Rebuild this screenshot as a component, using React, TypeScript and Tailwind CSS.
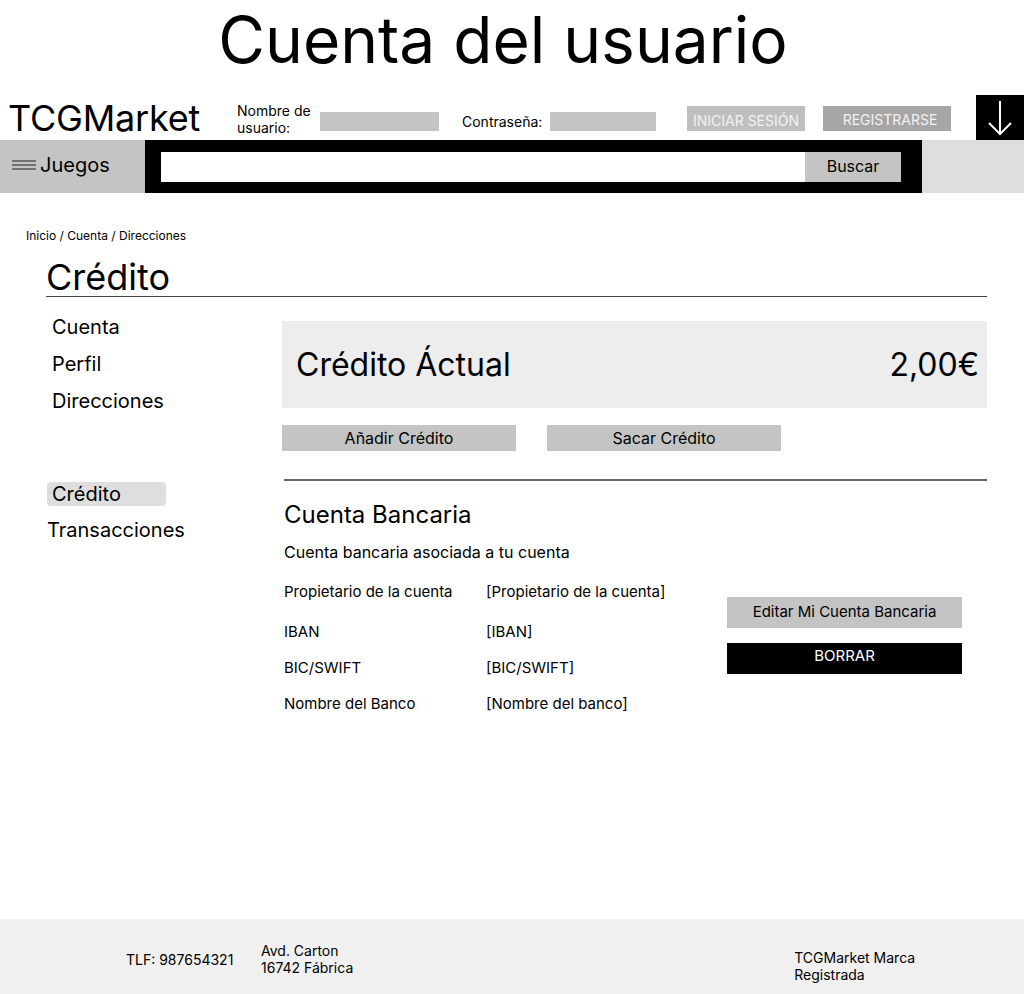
import React from 'react';

const rows: [string, string][] = [
  ['Propietario de la cuenta', '[Propietario de la cuenta]'],
  ['IBAN', '[IBAN]'],
  ['BIC/SWIFT', '[BIC/SWIFT]'],
  ['Nombre del Banco', '[Nombre del banco]'],
];

function Header() {
  return (
    <>
      <h1 className="h-[95px] pr-[18px] text-center text-[64px] leading-[80px] text-black">Cuenta del usuario</h1>
      <div className="flex h-[45px] items-start">
        <div className="w-[237px] pl-2 pt-[1px] text-[36px] leading-[44px] tracking-[-0.2px]">TCGMarket</div>
        <div className="mt-[7px] w-[83px] text-[14px] leading-[17px]">
          Nombre de
          <br />
          usuario:
        </div>
        <div className="mt-[17px] h-[19px] w-[119px] bg-[#c4c4c4]" />
        <div className="ml-[23px] mt-[17px] w-[88px] text-[14px] leading-[19px]">Contraseña:</div>
        <div className="mt-[17px] h-[19px] w-[106px] bg-[#c4c4c4]" />
        <button className="ml-[31px] mt-[11px] h-[25px] w-[118px] bg-[#bfbfbf] pt-[5px] text-[14px] leading-[20px] text-[#f2f2f2]">
          INICIAR SESIÓN
        </button>
        <button className="ml-[18px] mt-[11px] h-[25px] w-[128px] bg-[#a6a6a6] pl-[6px] pt-[2px] text-[14px] leading-[20px] text-[#f2f2f2]">
          REGISTRARSE
        </button>
        <div className="ml-auto flex h-[45px] w-[48px] items-center justify-center bg-black">
          <svg width="26" height="38" viewBox="0 0 26 38" fill="none" stroke="white" strokeWidth="2">
            <path d="M13 2v33M2 24l11 11 11-11" />
          </svg>
        </div>
      </div>
      <div className="flex h-[53px]">
        <div className="flex w-[145px] items-center gap-1 bg-[#c4c4c4] pb-[3px] pl-3">
          <svg width="24" height="12" viewBox="0 0 24 12" stroke="#555" strokeWidth="1.5">
            <path d="M0 2h24M0 6h24M0 10h24" />
          </svg>
          <span className="text-[20px]">Juegos</span>
        </div>
        <div className="flex w-[777px] items-center bg-black pl-4 pr-[21px]">
          <div className="h-[30px] flex-1 bg-white" />
          <button className="h-[30px] w-[96px] bg-[#c4c4c4] pb-[1px] text-[16px]">Buscar</button>
        </div>
        <div className="flex-1 bg-[#dedede]" />
      </div>
    </>
  );
}

function Sidebar() {
  return (
    <div className="w-[235px] shrink-0 text-[20px] leading-[24px]">
      <div className="flex flex-col gap-[13px] pl-[5px]">
        <div>Cuenta</div>
        <div>Perfil</div>
        <div>Direcciones</div>
      </div>
      <div className="mt-[69px] w-[119px] rounded-[4px] bg-[#dedede] pl-[5px]">Crédito</div>
      <div className="mt-[12px]">Transacciones</div>
    </div>
  );
}

export default function App() {
  return (
    <div className="flex min-h-[994px] flex-col bg-white font-['Inter',sans-serif] text-black">
      <Header />
      <div className="pl-[26px] pt-[35px] text-[12px] leading-[16px]">Inicio / Cuenta / Direcciones</div>
      <div className="ml-[46px] mr-[37px] mt-[14px] border-b border-[#444] text-[36px] leading-[38px]">Crédito</div>
      <div className="ml-[47px] mr-[37px] mt-[18px] flex">
        <Sidebar />
        <div className="flex-1 pt-[6px]">
          <div className="flex h-[87px] items-center justify-between bg-[#ededed] pl-[14px] pr-2 text-[32px]">
            <span>Crédito Áctual</span>
            <span>2,00€</span>
          </div>
          <div className="mt-[17px] flex gap-[31px]">
            <button className="h-[26px] w-[234px] bg-[#c4c4c4] text-[16px]">Añadir Crédito</button>
            <button className="h-[26px] w-[234px] bg-[#c4c4c4] text-[16px]">Sacar Crédito</button>
          </div>
          <div className="ml-[2px] mt-[28px] h-[2px] bg-[#666]" />
          <div className="ml-[2px] mt-[19px] text-[24px] leading-[30px]">Cuenta Bancaria</div>
          <div className="ml-[2px] mt-[12px] text-[16px] leading-[20px]">Cuenta bancaria asociada a tu cuenta</div>
          <div className="ml-[2px] mt-[20px] flex">
            <div className="flex w-[443px] flex-col gap-[16px] text-[15px] leading-[20px]">
              {rows.map(([label, value], i) => (
                <div key={label} className={i === 0 ? 'flex pb-[4px]' : 'flex'}>
                  <span className="w-[202px]">{label}</span>
                  <span>{value}</span>
                </div>
              ))}
            </div>
            <div className="mt-[15px] flex flex-col gap-[15px]">
              <button className="h-[31px] w-[235px] bg-[#c4c4c4] text-[15px]">Editar Mi Cuenta Bancaria</button>
              <button className="h-[31px] w-[235px] bg-black pb-[4px] text-[15px] text-white">BORRAR</button>
            </div>
          </div>
        </div>
      </div>
      <div className="mt-auto flex h-[75px] items-center bg-[#f0f0f0] text-[14px] leading-[17px]">
        <div className="ml-[126px] mt-[6px] w-[135px]">TLF: 987654321</div>
        <div className="mt-[5px]">
          Avd. Carton
          <br />
          16742 Fábrica
        </div>
        <div className="ml-[441px] mt-[19px]">
          TCGMarket Marca
          <br />
          Registrada
        </div>
      </div>
    </div>
  );
}
